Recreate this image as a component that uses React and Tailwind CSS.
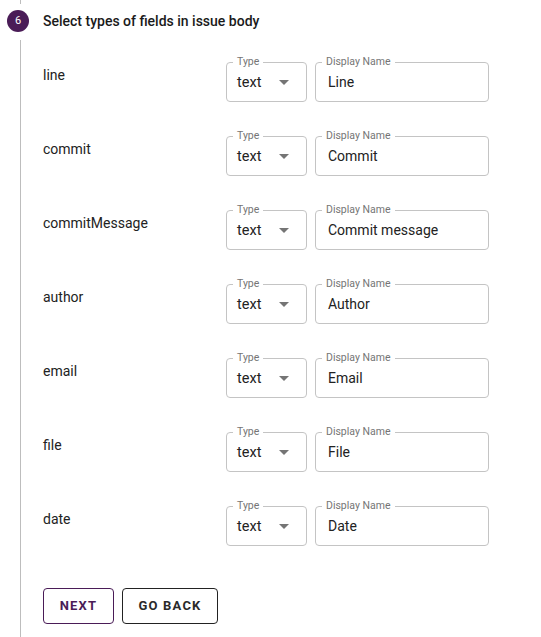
import React from "react";

const fields = [
  { key: "line", type: "text", display: "Line" },
  { key: "commit", type: "text", display: "Commit" },
  { key: "commitMessage", type: "text", display: "Commit message" },
  { key: "author", type: "text", display: "Author" },
  { key: "email", type: "text", display: "Email" },
  { key: "file", type: "text", display: "File" },
  { key: "date", type: "text", display: "Date" },
];

const Outlined = ({ label, className, children }) => (
  <div className={"relative h-[40px] rounded-[4px] border border-[#c4c4c4] " + className}>
    <span className="absolute -top-[8px] left-[6px] bg-white px-[4px] text-[10.5px] leading-[14px] text-[#757575]">
      {label}
    </span>
    {children}
  </div>
);

const FieldRow = ({ field }) => (
  <div className="mb-[34px] flex">
    <div className="mt-[1px] w-[183px] text-[14px] leading-[24px] text-[#222]">{field.key}</div>
    <Outlined label="Type" className="w-[81px]">
      <div className="flex h-full items-center justify-between pl-[10px] pr-[17px] pt-[1px] text-[14.5px] text-[#222]">
        <span>{field.type}</span>
        <svg width="10" height="5" viewBox="0 0 10 5">
          <path d="M0 0 L10 0 L5 5 Z" fill="#757575" />
        </svg>
      </div>
    </Outlined>
    <Outlined label="Display Name" className="ml-[8px] w-[174px]">
      <div className="flex h-full items-center pl-[12px] pt-[1px] text-[14px] text-[#222]">
        {field.display}
      </div>
    </Outlined>
  </div>
);

export default function App() {
  return (
    <div className="h-[637px] overflow-hidden bg-white" style={{ fontFamily: "Roboto, 'Liberation Sans', sans-serif" }}>
      <div className="ml-[20px] h-[4px] border-l border-[#bdbdbd]" />
      <div className="mt-[6px] flex items-center">
        <div className="ml-[7px] flex h-[22px] w-[22px] items-center justify-center rounded-full bg-[#4a1c57] text-[11px] text-white">
          6
        </div>
        <div className="ml-[14px] text-[14px] font-medium text-[#1a1a1a]">Select types of fields in issue body</div>
      </div>
      <div className="ml-[20px] mt-[8px] border-l border-[#bdbdbd] pl-[22px] pt-[22px] pb-[40px]">
        {fields.map((f) => (
          <FieldRow key={f.key} field={f} />
        ))}
        <div className="mt-[42px] flex gap-[8px]">
          <button className="h-[36px] w-[71px] rounded-[4px] border border-[#4a1c57] text-[13px] font-bold tracking-[1.2px] text-[#4a1c57]">
            NEXT
          </button>
          <button className="h-[36px] w-[96px] rounded-[4px] border border-[#222] text-[13px] font-bold tracking-[1.2px] text-[#2a2a2a]">
            GO BACK
          </button>
        </div>
      </div>
    </div>
  );
}
